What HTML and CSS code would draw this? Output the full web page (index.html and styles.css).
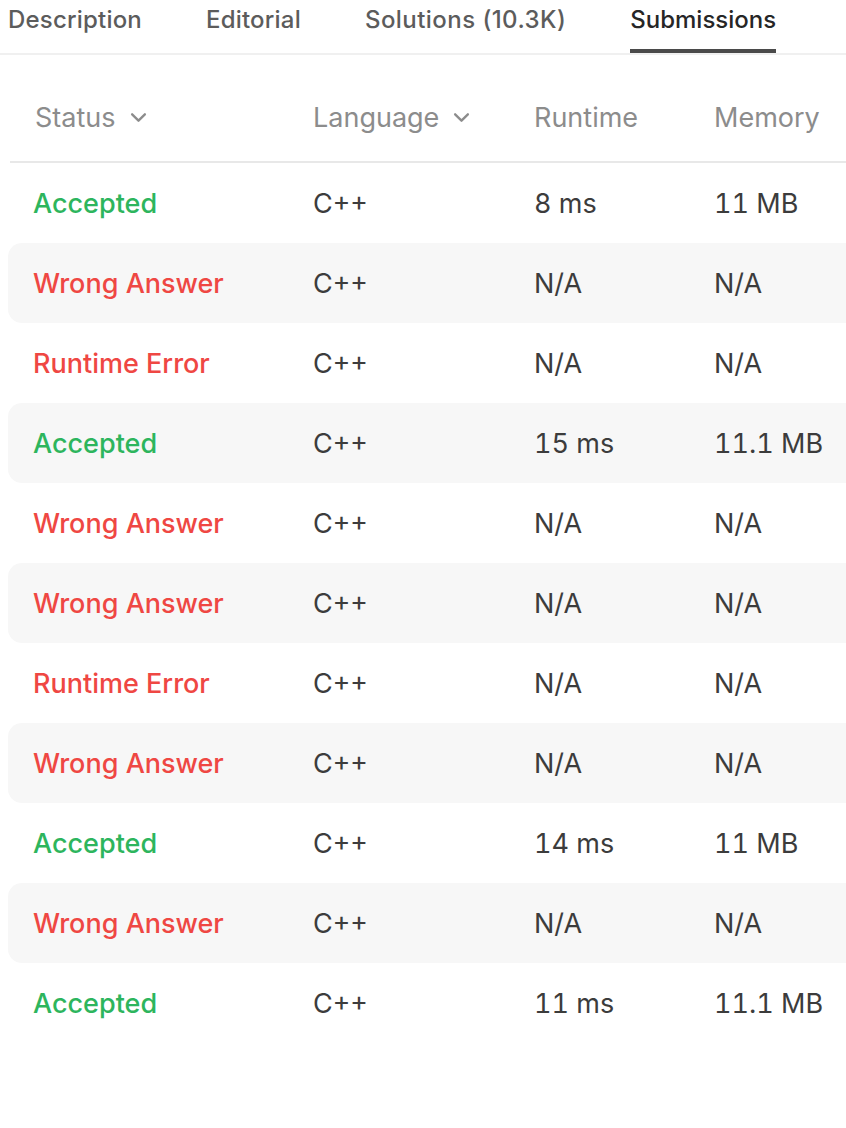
FILE: index.html
```html
<!DOCTYPE html>
<html>
<head>
<meta charset="utf-8">
<title>Submissions</title>
<link rel="stylesheet" href="styles.css">
</head>
<body>
<div class="tabs">
	<div class="tab">Description</div>
	<div class="tab">Editorial</div>
	<div class="tab wide">Solutions (10.3K)</div>
	<div class="tab active">Submissions</div>
</div>
<div class="table">
	<div class="head">
		<div class="c1">Status <svg class="chev" viewBox="0 0 16 10"><path d="M2 2l6 6 6-6"/></svg></div>
		<div class="c2">Language <svg class="chev" viewBox="0 0 16 10"><path d="M2 2l6 6 6-6"/></svg></div>
		<div class="c3">Runtime</div>
		<div class="c4">Memory</div>
	</div>
	<div class="row"><div class="c1 ok">Accepted</div><div class="c2">C++</div><div class="c3">8 ms</div><div class="c4">11 MB</div></div>
	<div class="row odd"><div class="c1 bad">Wrong Answer</div><div class="c2">C++</div><div class="c3">N/A</div><div class="c4">N/A</div></div>
	<div class="row"><div class="c1 bad">Runtime Error</div><div class="c2">C++</div><div class="c3">N/A</div><div class="c4">N/A</div></div>
	<div class="row odd"><div class="c1 ok">Accepted</div><div class="c2">C++</div><div class="c3">15 ms</div><div class="c4">11.1 MB</div></div>
	<div class="row"><div class="c1 bad">Wrong Answer</div><div class="c2">C++</div><div class="c3">N/A</div><div class="c4">N/A</div></div>
	<div class="row odd"><div class="c1 bad">Wrong Answer</div><div class="c2">C++</div><div class="c3">N/A</div><div class="c4">N/A</div></div>
	<div class="row"><div class="c1 bad">Runtime Error</div><div class="c2">C++</div><div class="c3">N/A</div><div class="c4">N/A</div></div>
	<div class="row odd"><div class="c1 bad">Wrong Answer</div><div class="c2">C++</div><div class="c3">N/A</div><div class="c4">N/A</div></div>
	<div class="row"><div class="c1 ok">Accepted</div><div class="c2">C++</div><div class="c3">14 ms</div><div class="c4">11 MB</div></div>
	<div class="row odd"><div class="c1 bad">Wrong Answer</div><div class="c2">C++</div><div class="c3">N/A</div><div class="c4">N/A</div></div>
	<div class="row"><div class="c1 ok">Accepted</div><div class="c2">C++</div><div class="c3">11 ms</div><div class="c4">11.1 MB</div></div>
</div>
</body>
</html>
```
FILE: styles.css
```css
*{
	margin: 0;
	padding: 0;
	box-sizing: border-box;
}
html,body{
	background: #fff;
	overflow: hidden;
}
body{
	width: 846px;
	height: 1128px;
	font-family: "Inter", "Liberation Sans", sans-serif;
	color: #3c3c3c;
}
.tabs{
	display: flex;
	gap: 64px;
	padding-left: 8px;
	height: 55px;
	border-bottom: 2px solid #f0f0f0;
}
.tab{
	font-size: 24px;
	font-weight: 500;
	letter-spacing: 0.2px;
	color: #5c5c5c;
	line-height: 40px;
	height: 53px;
	border-bottom: 4px solid transparent;
}
.tab.wide{
	letter-spacing: 0.45px;
}
.tab.active{
	color: #262626;
	letter-spacing: 0;
	border-bottom-color: #4a4a4a;
}
.table{
	width: 900px;
	padding-left: 8px;
	margin-top: 26px;
}
.head{
	display: flex;
	align-items: center;
	height: 82px;
	padding-bottom: 8px;
	margin-left: 2px;
	border-bottom: 2px solid #e8e8e8;
	color: #8c8c8c;
	font-size: 27px;
}
.chev{
	width: 17px;
	height: 11px;
	margin-left: 14px;
	fill: none;
	stroke: #8c8c8c;
	stroke-width: 2.2;
	stroke-linecap: round;
	stroke-linejoin: round;
}
.row{
	display: flex;
	align-items: center;
	height: 80px;
	font-size: 27px;
	font-variant-numeric: tabular-nums;
	border-radius: 14px;
}
.row.odd{
	background: #f7f7f7;
}
.c1{
	width: 305px;
	padding-left: 25px;
	display: flex;
	align-items: center;
}
.head .c1{
	width: 303px;
}
.c2{
	width: 221px;
	display: flex;
	align-items: center;
}
.c3{
	width: 180px;
}
.ok{
	color: #2db55d;
	font-weight: 500;
}
.bad{
	color: #ef4743;
	font-weight: 500;
}
```
